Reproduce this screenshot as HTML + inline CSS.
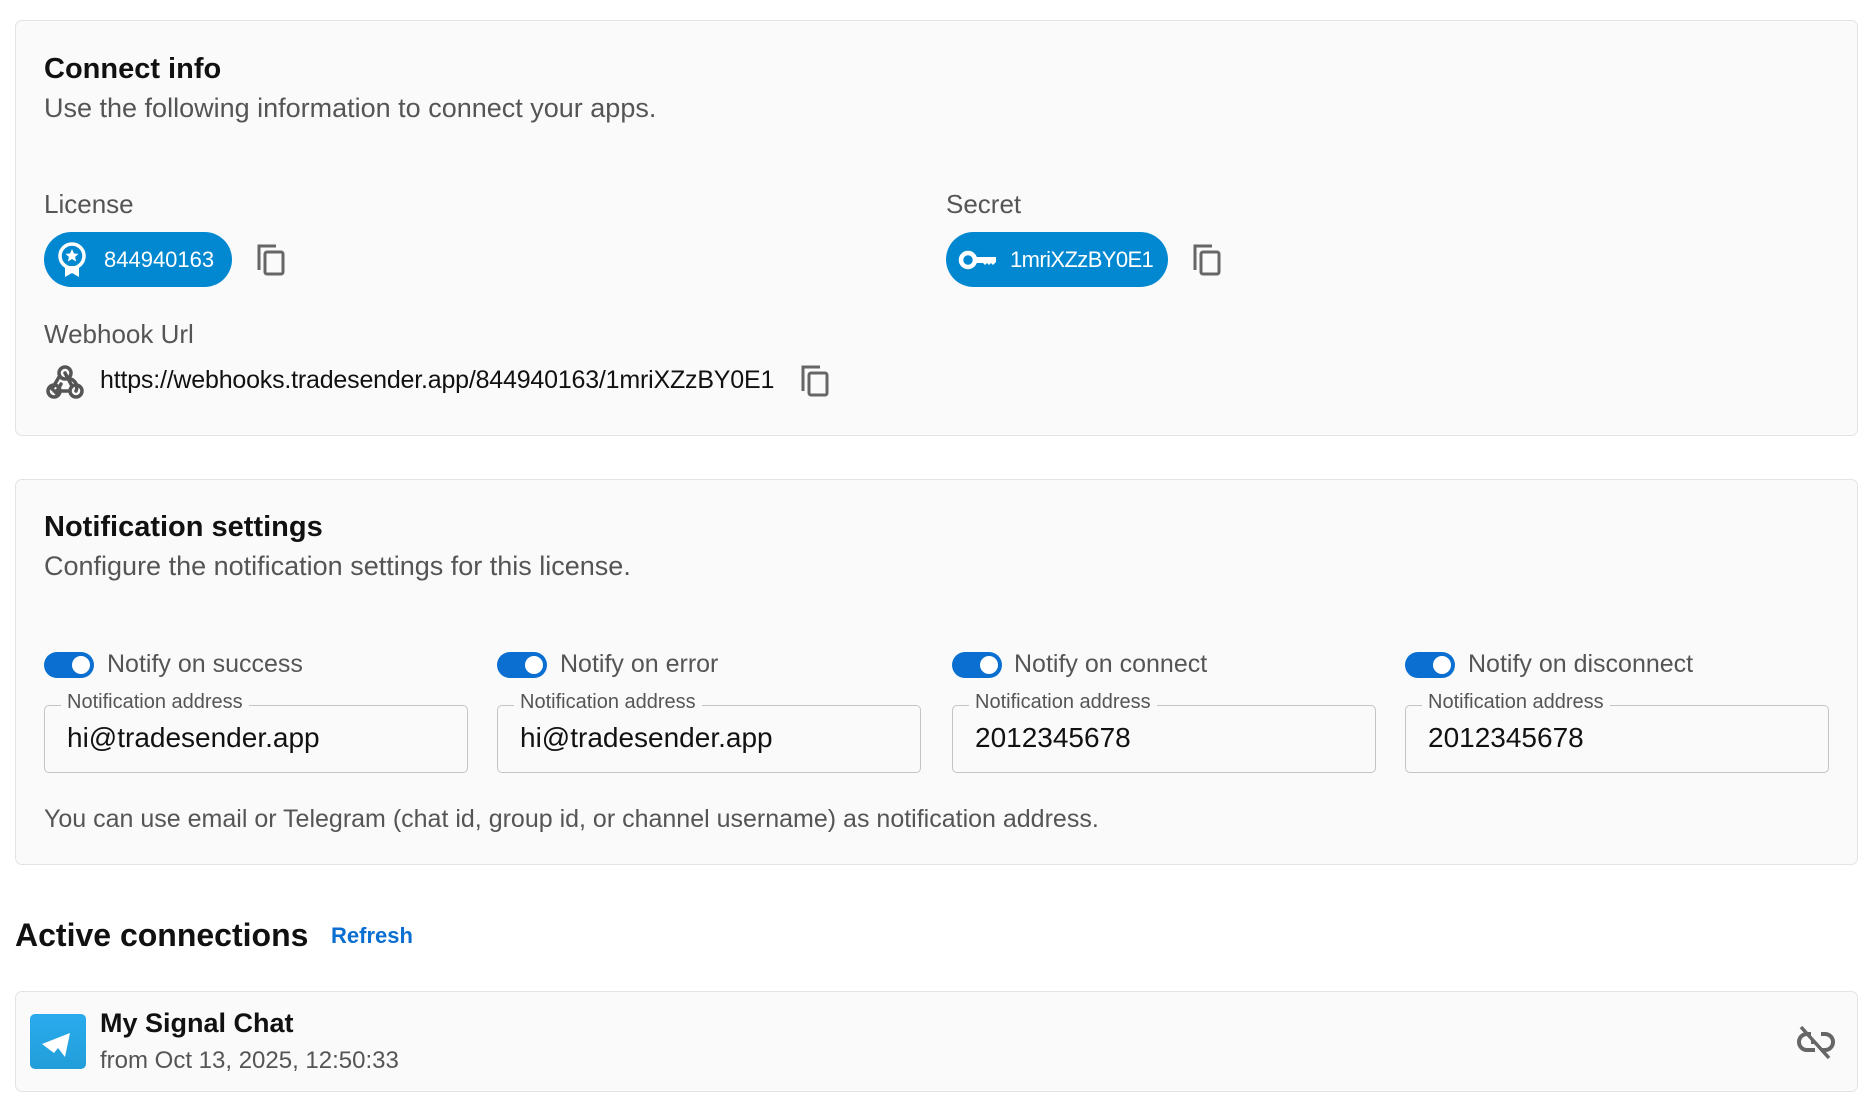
<!DOCTYPE html>
<html><head><meta charset="utf-8"><style>
*{margin:0;padding:0;box-sizing:border-box}
body{width:1875px;height:1109px;background:#fff;font-family:"Liberation Sans",sans-serif;position:relative;overflow:hidden;color:#111}
.card{position:absolute;left:15px;width:1843px;background:#fafafa;border:1px solid #e3e3e3;border-radius:7px}
.a{position:absolute;white-space:nowrap}
.h{font-weight:bold;font-size:28px;color:#111}
.sub{font-size:27px;color:#555}
.lbl{font-size:26px;color:#555}
.pill{position:absolute;height:55px;border-radius:28px;background:#0288d1;color:#fff;font-size:22px;display:flex;align-items:center}
.tg{position:absolute;width:50px;height:26px;border-radius:13px;background:#0a6fd0}
.tg::after{content:"";position:absolute;right:4px;top:4px;width:18px;height:18px;border-radius:50%;background:#fff}
.tl{font-size:25px;color:#555}
.box{position:absolute;top:705px;width:424px;height:68px;border:1px solid #c4c4c4;border-radius:5px}
.box span.l{position:absolute;left:16px;top:-15px;background:#fafafa;padding:0 6px;font-size:20px;color:#555}
.box span.v{position:absolute;left:22px;top:16px;font-size:28px;color:#111}
</style></head><body>

<div class="card" style="top:20px;height:416px"></div>
<div class="a h" style="left:44px;top:53px;font-size:29px">Connect info</div>
<div class="a sub" style="left:44px;top:93px">Use the following information to connect your apps.</div>
<div class="a lbl" style="left:44px;top:189px">License</div>
<div class="pill" style="left:44px;top:232px;width:188px">
 <svg style="margin-left:12px" width="32" height="38" viewBox="0 0 32 38"><circle cx="16" cy="15" r="12" fill="none" stroke="#fff" stroke-width="3.5"/><path d="M16 8l2 4.5 4.5.4-3.4 3 1 4.6L16 18l-4.1 2.5 1-4.6-3.4-3 4.5-.4z" fill="#fff"/><path d="M9 25v11l7-4 7 4V25" fill="#fff"/></svg>
 <span style="margin-left:16px">844940163</span></div>
<svg class="a" style="left:256px;top:243px" width="32" height="34" viewBox="0 0 32 34"><path d="M3 27V3h17" fill="none" stroke="#666" stroke-width="3"/><rect x="9" y="9" width="18" height="22" rx="2" fill="none" stroke="#666" stroke-width="3"/></svg>

<div class="a lbl" style="left:946px;top:189px">Secret</div>
<div class="pill" style="left:946px;top:232px;width:222px">
 <svg style="margin-left:12px" width="40" height="22" viewBox="0 0 40 22"><circle cx="10" cy="11" r="7" fill="none" stroke="#fff" stroke-width="4.5"/><path d="M16 8h22v5l-3 3-2-2-2 2-2-2-2 2-2-2h-9z" fill="#fff"/></svg>
 <span style="margin-left:12px;letter-spacing:-0.6px">1mriXZzBY0E1</span></div>
<svg class="a" style="left:1192px;top:243px" width="32" height="34" viewBox="0 0 32 34"><path d="M3 27V3h17" fill="none" stroke="#666" stroke-width="3"/><rect x="9" y="9" width="18" height="22" rx="2" fill="none" stroke="#666" stroke-width="3"/></svg>

<div class="a lbl" style="left:44px;top:319px">Webhook Url</div>
<svg class="a" style="left:45px;top:362px" width="40" height="38" viewBox="0 0 40 38" fill="none" stroke="#555" stroke-width="3.5" stroke-linecap="round"><path d="M16 22 L11 31"/><circle cx="20" cy="11" r="6"/><path d="M20 11l7 13"/><circle cx="9" cy="29" r="6"/><path d="M9 29h14"/><circle cx="31" cy="29" r="6"/><path d="M14 15 7 27M26 17a9 9 0 0 1 5 12"/></svg>
<div class="a" style="left:100px;top:366px;font-size:25px;color:#111;letter-spacing:-0.2px">https://webhooks.tradesender.app/844940163/1mriXZzBY0E1</div>
<svg class="a" style="left:800px;top:364px" width="32" height="34" viewBox="0 0 32 34"><path d="M3 27V3h17" fill="none" stroke="#666" stroke-width="3"/><rect x="9" y="9" width="18" height="22" rx="2" fill="none" stroke="#666" stroke-width="3"/></svg>

<div class="card" style="top:479px;height:386px"></div>
<div class="a h" style="left:44px;top:511px;font-size:29px">Notification settings</div>
<div class="a sub" style="left:44px;top:551px">Configure the notification settings for this license.</div>

<div class="tg" style="left:44px;top:652px"></div><div class="a tl" style="left:107px;top:650px">Notify on success</div>
<div class="tg" style="left:497px;top:652px"></div><div class="a tl" style="left:560px;top:650px">Notify on error</div>
<div class="tg" style="left:952px;top:652px"></div><div class="a tl" style="left:1014px;top:650px">Notify on connect</div>
<div class="tg" style="left:1405px;top:652px"></div><div class="a tl" style="left:1468px;top:650px">Notify on disconnect</div>

<div class="box" style="left:44px"><span class="l">Notification address</span><span class="v">hi@tradesender.app</span></div>
<div class="box" style="left:497px"><span class="l">Notification address</span><span class="v">hi@tradesender.app</span></div>
<div class="box" style="left:952px"><span class="l">Notification address</span><span class="v">2012345678</span></div>
<div class="box" style="left:1405px"><span class="l">Notification address</span><span class="v">2012345678</span></div>

<div class="a" style="left:44px;top:805px;font-size:25px;color:#555">You can use email or Telegram (chat id, group id, or channel username) as notification address.</div>

<div class="a" style="left:15px;top:917px;font-size:32px;font-weight:bold;color:#111">Active connections</div>
<div class="a" style="left:331px;top:923px;font-size:22px;font-weight:bold;color:#0a6fd0">Refresh</div>

<div class="card" style="top:991px;height:101px"></div>
<svg class="a" style="left:30px;top:1014px" width="56" height="55" viewBox="0 0 56 55"><defs><linearGradient id="g" x1="0" y1="0" x2="0" y2="1"><stop offset="0" stop-color="#2aabee"/><stop offset="1" stop-color="#229ed9"/></linearGradient></defs><rect width="56" height="55" rx="5" fill="url(#g)"/><path d="M12 30 40 19 35 43 28 34 24 39z" fill="#fff"/></svg>
<div class="a" style="left:100px;top:1008px;font-size:27px;font-weight:bold;color:#111">My Signal Chat</div>
<div class="a" style="left:100px;top:1047px;font-size:24px;color:#555">from Oct 13, 2025, 12:50:33</div>
<svg class="a" style="left:1797px;top:1024px" width="38" height="36" viewBox="0 0 38 36" fill="none" stroke="#666" stroke-width="4"><path d="M14 10h-4a8 8 0 0 0 0 16h8M24 10h4a8 8 0 0 1 0 16h-4M14 18h4"/><path d="M4 3 32 34" stroke-width="3.5"/></svg>
</body></html>
